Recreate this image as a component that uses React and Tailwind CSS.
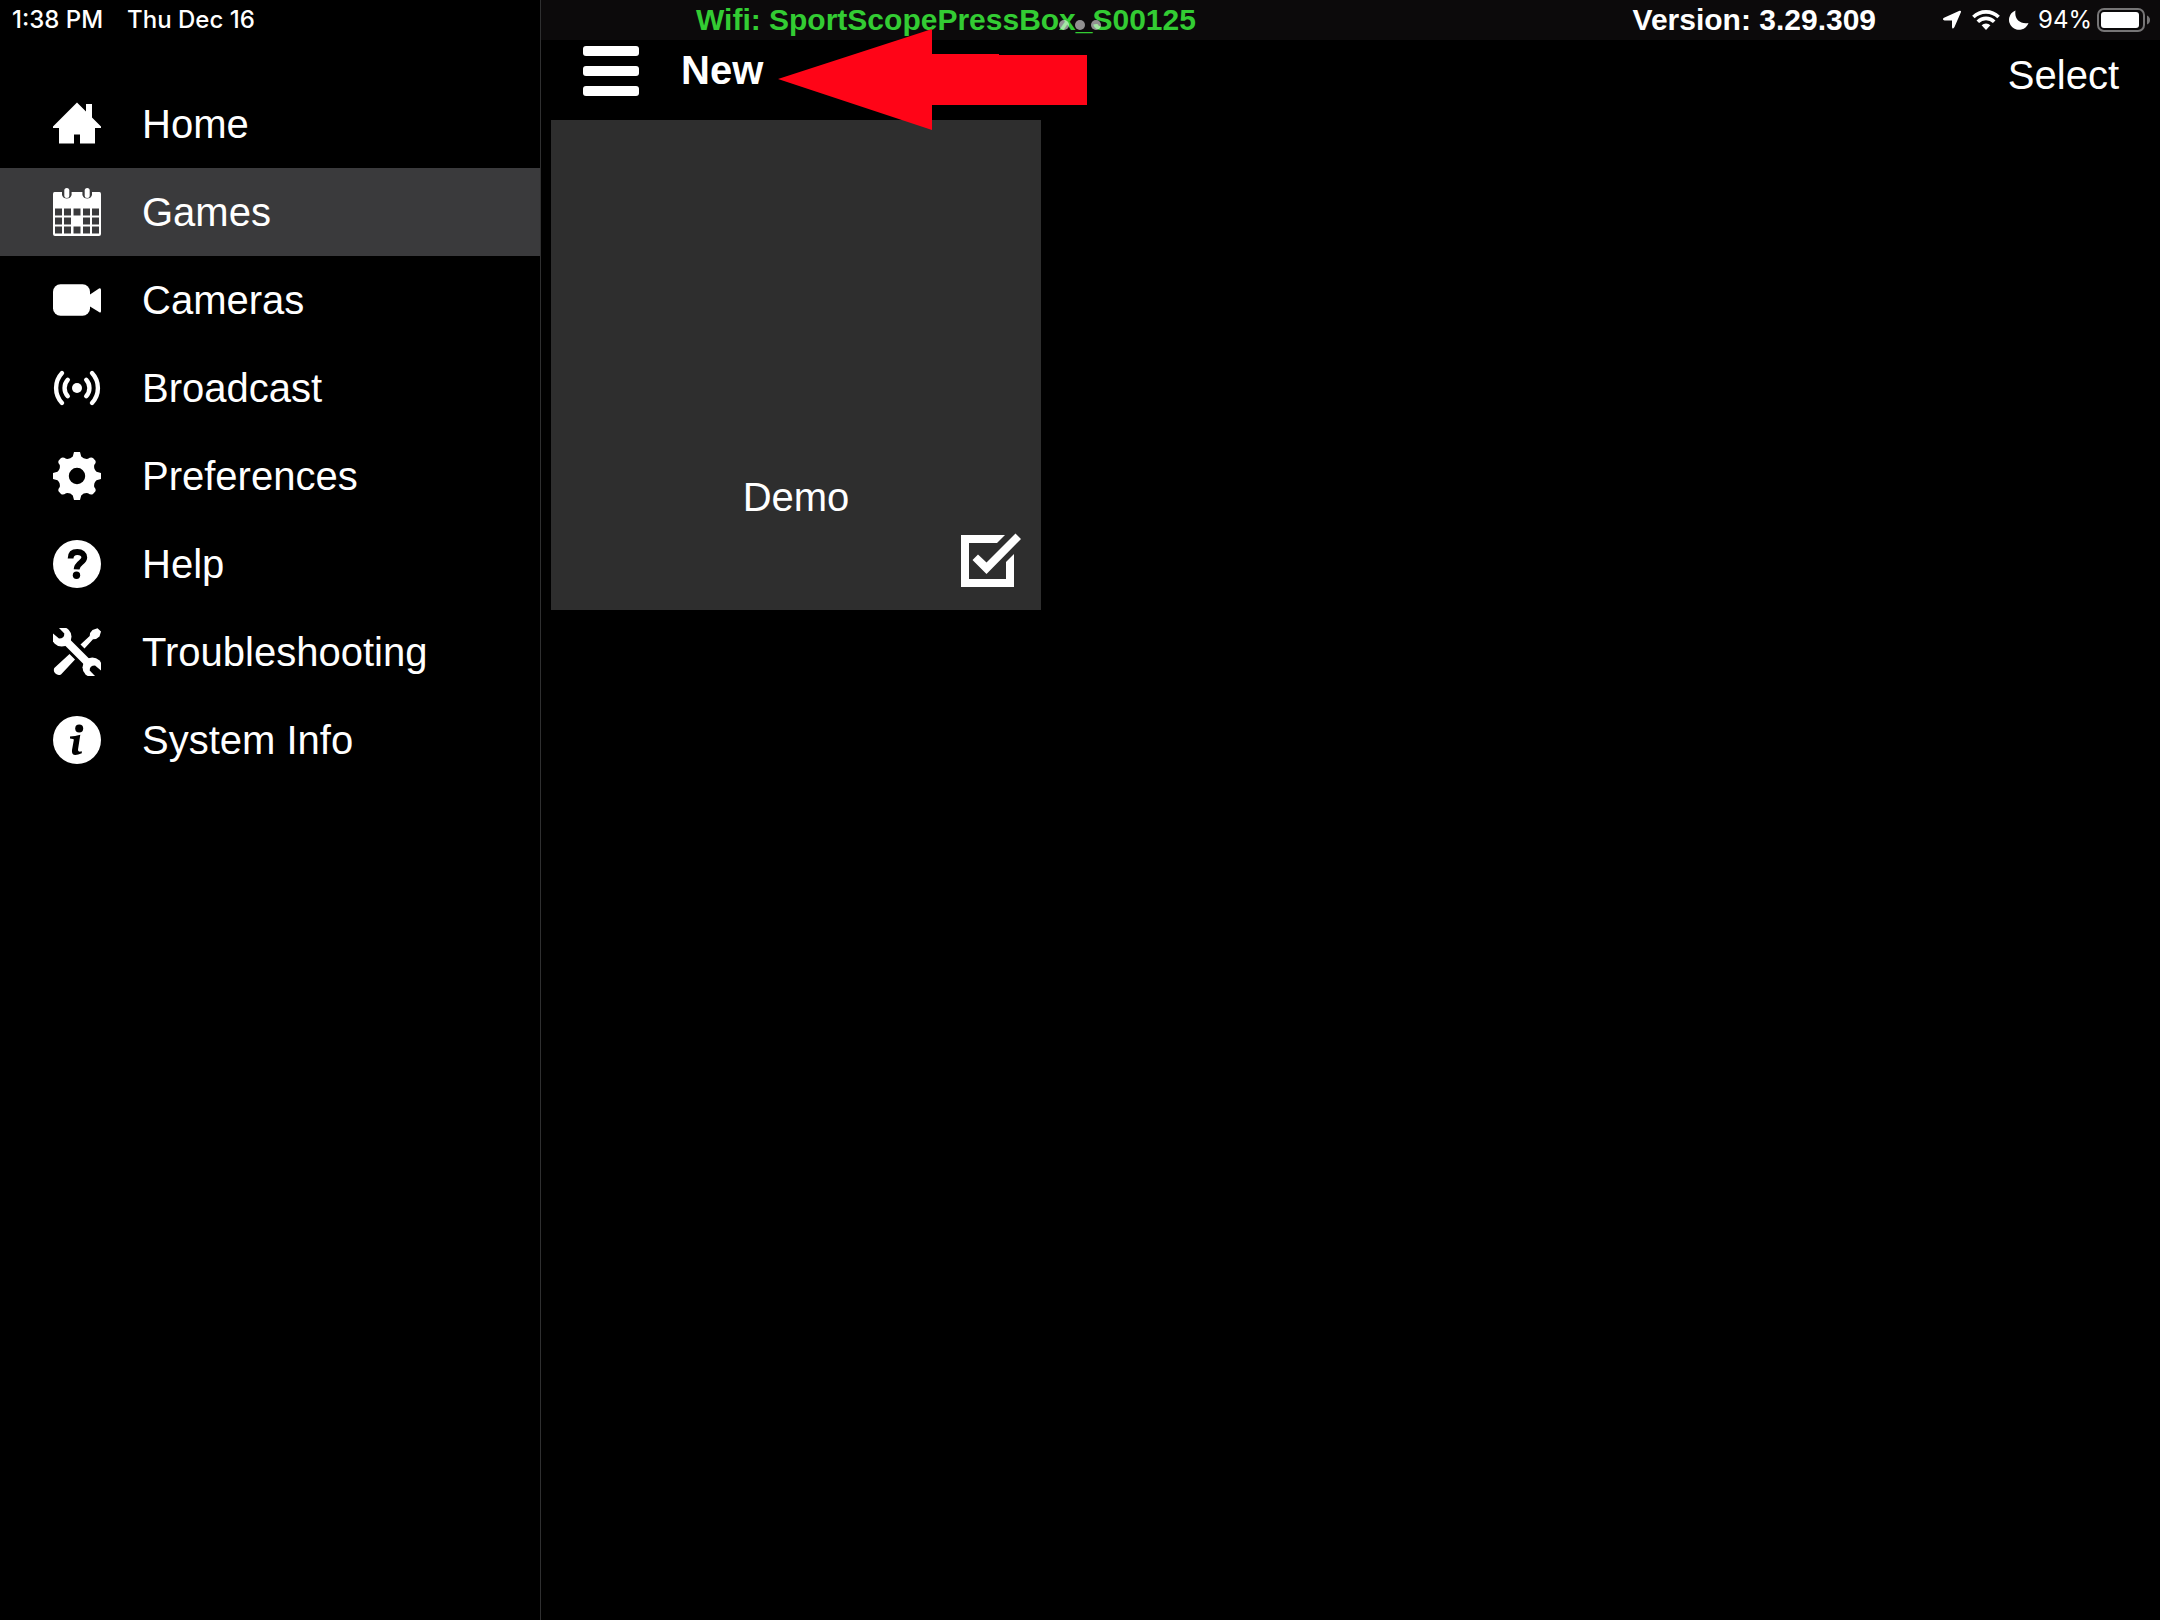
import React from "react";

const HomeIcon = () => (
  <path d="M24 2.5 33 11.5V4H39V17.5L48 26.5V28H42V43.500H27V34.500H21V43.500H6V28H0V26.500Z" />
);

const CalendarIcon = () => (
  <>
    <path
      fillRule="evenodd"
      d="M1.5 4H9V7a5 5 0 0 0 9.6 0V4H29.4V7a5 5 0 0 0 9.6 0V4H46.500Q48 4 48 6V46Q48 48 46 48H2Q0 48 0 46V6Q0 4 1.500 4Z
      M2 20.500v7h7v-7ZM11 20.500v7h7v-7ZM20.500 20.500v7h7v-7ZM30 20.500v7h7v-7ZM39 20.500v7h7v-7Z
      M2 29.500v7h7v-7ZM11 29.500v7h7v-7ZM30 29.500v7h7v-7ZM39 29.500v7h7v-7Z
      M2 38.500v7h7v-7ZM11 38.500v7h7v-7ZM20.500 38.500v7h7v-7ZM30 38.500v7h7v-7ZM39 38.500v7h7v-7Z"
    />
    <rect x="11.300" y="0" width="5" height="10" rx="2.500" />
    <rect x="31.700" y="0" width="5" height="10" rx="2.500" />
  </>
);

const CameraIcon = () => (
  <>
    <rect x="0" y="8.300" width="37" height="31.500" rx="7.500" />
    <path d="M37 18.500 46 12.500Q48 11.500 48 14V35Q48 37.500 46 36L37 30.500Z" />
  </>
);

const BroadcastIcon = () => (
  <>
    <circle cx="24" cy="24" r="5" />
    <g fill="none" stroke="currentColor" strokeWidth="4.400" strokeLinecap="round">
      <path d="M14.800 15.800A12 12 0 0 0 14.800 32.200M33.200 15.800A12 12 0 0 1 33.200 32.200" />
      <path d="M9 9A22 22 0 0 0 9 39M39 9A22 22 0 0 1 39 39" />
    </g>
  </>
);

const GearIcon = () => (
  <path
    fillRule="evenodd"
    d="M21 0H27L28.200 4.500Q31 7.500 35 6.800Q38 4.500 40 6L42.300 8.500Q43.500 10.500 41.200 13Q40.500 17 43.500 19.800L48 21V27L43.500 28.200Q40.500 31 41.200 35Q43.500 37.500 42.300 39.500L40 42Q38 43.500 35 41.200Q31 40.500 28.200 43.500L27 48H21L19.800 43.500Q17 40.500 13 41.200Q10 43.500 8 42L5.700 39.500Q4.500 37.500 6.800 35Q7.500 31 4.500 28.200L0 27V21L4.500 19.800Q7.500 17 6.800 13Q4.500 10.500 5.700 8.500L8 6Q10 4.500 13 6.800Q17 7.500 19.800 4.500ZM24 15.800A8.200 8.200 0 1 0 24 32.200A8.200 8.200 0 1 0 24 15.800Z"
  />
);

const HelpIcon = () => (
  <>
    <circle cx="24" cy="24" r="24" />
    <path
      d="M17.600 18.500C17.600 14 20 12 24.300 12C28.800 12 31.300 14.200 31.300 17.500C31.300 22.500 24 22.500 23.600 29.300"
      fill="none"
      stroke="#000"
      strokeWidth="5.800"
    />
    <circle cx="23.500" cy="35.200" r="3.700" fill="#000" />
  </>
);

const ToolsIcon = () => (
  <>
    <mask id="wrench-jaws" maskUnits="userSpaceOnUse" x="0" y="0" width="48" height="48">
      <rect width="48" height="48" fill="#fff" />
      <path d="M0 5.500V0H6L11.300 5.500Q11.500 10.500 6 10.500Z" fill="#000" />
      <path d="M48 42.500V48H42L36.700 42.500Q36.500 37.500 42 37.500Z" fill="#000" />
    </mask>
    <path d="M44.500 .3 48 3.500 46.500 8.500Q43.500 11.500 40 11.300L31.500 20.500 27.500 16.500 36.700 8Q36.500 4.500 39.500 2Z" />
    <path d="M16.500 26 22 31.500 8 46.500A5 5 0 0 1 1.300 40Z" />
    <g mask="url(#wrench-jaws)">
      <circle cx="8.700" cy="8.700" r="9.800" />
      <circle cx="39.300" cy="39.300" r="9.800" />
      <path d="M10 10 38 38" stroke="currentColor" strokeWidth="7.800" />
    </g>
  </>
);

const InfoIcon = () => (
  <>
    <circle cx="24" cy="24" r="24" />
    <circle cx="26.200" cy="12.600" r="4" fill="#000" />
    <path
      d="M17 20.500Q22 20.300 27.300 18.800L25 33.500Q24.500 36.500 28.800 35.300V37.300Q18 42 19 34L20.800 24Q21 22.500 17 22.500Z"
      fill="#000"
    />
  </>
);

const items = [
  { label: "Home", Icon: HomeIcon },
  { label: "Games", Icon: CalendarIcon, active: true },
  { label: "Cameras", Icon: CameraIcon },
  { label: "Broadcast", Icon: BroadcastIcon },
  { label: "Preferences", Icon: GearIcon },
  { label: "Help", Icon: HelpIcon },
  { label: "Troubleshooting", Icon: ToolsIcon },
  { label: "System Info", Icon: InfoIcon },
];

function Sidebar() {
  return (
    <aside className="box-content w-1/4 shrink-0 border-r border-[#2f2f30]">
      <div className="flex h-10 items-center gap-6 pl-3 font-['Inter',sans-serif] text-[24px] leading-10 font-medium">
        <span>1:38 PM</span>
        <span>Thu Dec 16</span>
      </div>
      <nav className="mt-10 flex flex-col">
        {items.map(({ label, Icon, active }) => (
          <a
            key={label}
            href="#"
            aria-current={active ? "page" : undefined}
            className={
              active
                ? "flex h-22 items-center gap-[41px] bg-[#3a3a3c] pl-[53px]"
                : "flex h-22 items-center gap-[41px] pl-[53px]"
            }
          >
            <svg viewBox="0 0 48 48" className="size-12 shrink-0" fill="currentColor" aria-hidden="true">
              <Icon />
            </svg>
            <span>{label}</span>
          </a>
        ))}
      </nav>
    </aside>
  );
}

function StatusIcons() {
  return (
    <div className="flex items-center font-['Inter',sans-serif] text-[24px] leading-10">
      <svg viewBox="0 0 18 20" className="mr-[11px] h-5 w-[18px]" fill="currentColor" aria-label="Location">
        <path d="M16.500 .8Q18.500 .3 17.900 2.200L11.500 17Q9.300 20 9 17V10.500H1.500Q-1.500 9.500 1 7.700Z" />
      </svg>
      <svg viewBox="0 0 28 20" className="mr-[9px] h-5 w-7" fill="none" stroke="currentColor" strokeWidth="3.600" aria-label="Wi-Fi">
        <path d="M1.400 7A18 18 0 0 1 26.600 7M5.800 11.800A11.500 11.500 0 0 1 22.200 11.800" />
        <path d="M9.600 15.200A6.600 6.600 0 0 1 18.400 15.200L14 20Z" fill="currentColor" stroke="none" />
      </svg>
      <svg viewBox="0 0 20 20" className="mr-[9px] size-5" fill="currentColor" aria-label="Do not disturb">
        <path d="M6.500 .5C5 9 11 14.500 19.500 13A10 10 0 1 1 6.500 .5Z" />
      </svg>
      <span>94%</span>
      <svg viewBox="0 0 54 24" className="ml-[5px] h-6 w-[54px]" aria-label="Battery">
        <rect x="1" y="1" width="46" height="22" rx="6" fill="none" stroke="#767576" strokeWidth="2" />
        <rect x="4" y="4" width="38" height="16" rx="3" fill="#fff" />
        <path d="M50 7.500Q53 9 53 12T50 16.500Z" fill="#767576" />
      </svg>
    </div>
  );
}

export default function App() {
  return (
    <div className="flex min-h-screen overflow-hidden bg-black font-['Liberation_Sans',Arial,sans-serif] text-[40px] leading-[48px] text-white">
      <Sidebar />
      <main className="min-w-0 flex-1">
        <div className="relative flex h-10 items-center bg-[#0c0a0b] pr-[9px] pl-[155px] text-[30px] leading-10 font-bold">
          <span className="text-[#33cc33]">Wifi: SportScopePressBox_S00125</span>
          <span className="mr-[67px] ml-auto">Version: 3.29.309</span>
          <div className="font-normal">
            <StatusIcons />
          </div>
          <div className="absolute top-5 left-[518px] flex gap-[6px]">
            <span className="size-[10px] rounded-full bg-white/55" />
            <span className="size-[10px] rounded-full bg-white/55" />
            <span className="size-[10px] rounded-full bg-white/55" />
          </div>
        </div>
        <header className="relative flex h-20 items-start justify-between pr-[41px] pl-[42px]">
          <div className="flex items-start gap-[42px]">
            <button type="button" aria-label="Menu" className="mt-[6px] flex flex-col gap-[10px]">
              <span className="h-[10px] w-14 rounded-[3px] bg-white" />
              <span className="h-[10px] w-14 rounded-[3px] bg-white" />
              <span className="h-[10px] w-14 rounded-[3px] bg-white" />
            </button>
            <button type="button" className="mt-[6px] font-bold">New</button>
          </div>
          <button type="button" className="mt-[11px]">Select</button>
          <svg viewBox="0 0 310 102" className="absolute -top-[11px] left-[237px] z-10 h-[102px] w-[310px]" fill="#ff0417" aria-hidden="true">
            <path d="M0 50 154 0V25H221V26H309V76H154V101Z" />
          </svg>
        </header>
        <section className="px-[10px]">
          <article className="flex size-[490px] flex-col justify-end bg-[#2e2e2e]">
            <h2 className="text-center">Demo</h2>
            <label className="mt-3 mr-5 mb-[21px] self-end">
              <input type="checkbox" defaultChecked className="sr-only" aria-label="Demo selected" />
              <svg viewBox="0 0 60 56" className="h-14 w-[60px]" fill="currentColor" aria-hidden="true">
                <path d="M0 2H44L36 10H8V46H45V29L53 21V54H0Z" />
                <path d="M54.500 .5 60 6 25.500 41 11.500 27 17 21.500 25.500 29.500Z" />
              </svg>
            </label>
          </article>
        </section>
      </main>
    </div>
  );
}
